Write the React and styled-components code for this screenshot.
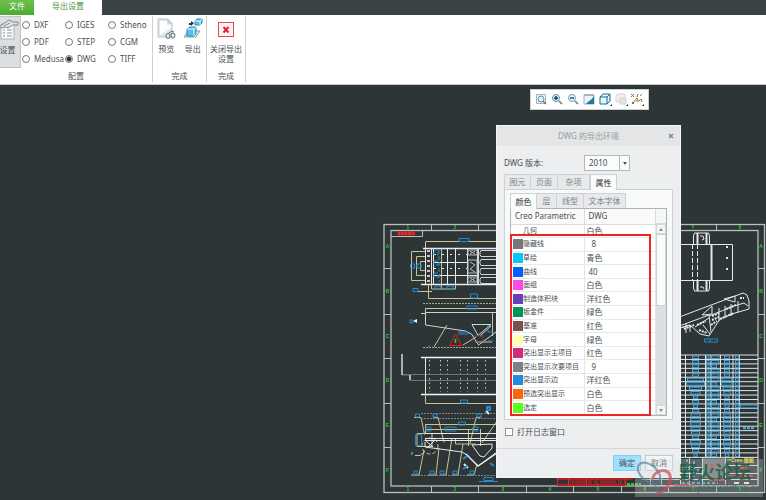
import { useState } from 'react';
import styled, { createGlobalStyle } from 'styled-components';

const FORMATS = ['DXF', 'IGES', 'Stheno', 'PDF', 'STEP', 'CGM', 'Medusa', 'DWG', 'TIFF'];

const TABS = [
  { name: '图元', width: 27 },
  { name: '页面', width: 27 },
  { name: '杂项', width: 32 },
  { name: '属性', width: 27 },
];

const SUB_TABS = [
  { name: '颜色', width: 27 },
  { name: '层', width: 20 },
  { name: '线型', width: 27 },
  { name: '文本字体', width: 42 },
];

const COLOR_ROWS = [
  { name: '几何', value: '白色' },
  { name: '隐藏线', value: '8', color: '#77777b', pad: 5 },
  { name: '草绘', value: '青色', color: '#00c8ff' },
  { name: '曲线', value: '40', color: '#0062ff', pad: 2 },
  { name: '面组', value: '白色', color: '#ff4be6' },
  { name: '制造体积块', value: '洋红色', color: '#663ec0' },
  { name: '钣金件', value: '绿色', color: '#00965a' },
  { name: '基准', value: '红色', color: '#7c4f53' },
  { name: '字母', value: '绿色', color: '#ffffae' },
  { name: '突出显示主项目', value: '红色', color: '#cc2f79' },
  { name: '突出显示次要项目', value: '9', color: '#7d808b', pad: 5 },
  { name: '突出显示边', value: '洋红色', color: '#1d8ddd' },
  { name: '预选突出显示', value: '白色', color: '#ff660a' },
  { name: '选定', value: '白色', color: '#56ff1b' },
];

function SettingsIcon() {
  return (
    <svg width="24" height="22" viewBox="0 0 24 22" fill="none">
      <rect x="5" y="5" width="13" height="15" fill="#f8fafb" stroke="#a8b2b7" />
      <path d="M7 11h2M11 11h5M7 14h2M11 14h5M7 17h2M11 17h5" stroke="#8497a1" />
      <path d="M3 8 13 1l4 2h5v3h-5l-5 3-3-1-4 1z" fill="#dfe5e8" stroke="#7b888e" />
      <path d="m8 7 6-3" stroke="#7b888e" />
    </svg>
  );
}

function PreviewIcon() {
  return (
    <svg width="20" height="22" viewBox="0 0 20 22" fill="none">
      <path d="M2 1h10l4 4v14H2z" fill="#dfe7ea" stroke="#bac3c7" />
      <path d="M4 3h7v4h4v3L4 17z" fill="#fbfdfe" />
      <path d="M12 1v4h4" stroke="#bac3c7" />
      <ellipse cx="12" cy="18" rx="2" ry="2.500" fill="#dfe8ec" stroke="#5c6870" />
      <ellipse cx="17" cy="17.500" rx="2" ry="2.500" fill="#dfe8ec" stroke="#5c6870" />
      <path d="m13 15 3-2 2 1" stroke="#5c6870" />
    </svg>
  );
}

function ExportIcon() {
  return (
    <svg width="20" height="22" viewBox="0 0 20 22" fill="none">
      <path d="m1 19 4-6h12l-4 6z" fill="#edf2f5" stroke="#8b999f" />
      <path d="m4 11 3-2h6v7l-2 2H4z" fill="#5dc0ea" stroke="#2a8ab8" />
      <path d="M4 11h7v7M11 11l2-2" stroke="#e3f8ff" />
      <path d="m12 3 2-2h5v4l-2 2h-5z" fill="#5dc0ea" stroke="#2a8ab8" />
      <path d="M12 3h5v4M17 3l2-2" stroke="#e3f8ff" />
      <path d="M6 7V5h2V3l3 2-3 3V7z" fill="#26343b" />
    </svg>
  );
}

function CloseExportIcon() {
  return (
    <svg width="18" height="18" viewBox="0 0 18 18" fill="none">
      <rect x="1.500" y="2.500" width="15" height="14" fill="#fff3f3" stroke="#df4a4d" />
      <path d="m6.500 7 5 5.500M11.500 7l-5 5.500" stroke="#d52631" strokeWidth="2" />
    </svg>
  );
}

// small icons of the graphics toolbar
const VIEW_TOOLS = [
  {
    name: '重新调整',
    art: (
      <>
        <path d="M1.500 1.500h9v9h-9z" fill="#f1f4f5" stroke="#a9b2b7" />
        <circle cx="6" cy="6" r="3" fill="#d9eff9" stroke="#5896b3" />
        <path d="m8 8 3 3" stroke="#777" strokeWidth="1.500" />
      </>
    ),
  },
  {
    name: '放大',
    art: (
      <>
        <circle cx="5" cy="5" r="3.500" fill="#e3f5fc" stroke="#4f94b5" />
        <path d="M3 5h4M5 3v4" stroke="#123f5b" strokeWidth="1.500" />
        <path d="m8 8 3 3" stroke="#777" strokeWidth="1.500" />
      </>
    ),
  },
  {
    name: '缩小',
    art: (
      <>
        <circle cx="5" cy="5" r="3.500" fill="#e3f5fc" stroke="#6ba1b9" />
        <path d="M3 5h4" stroke="#1d546f" strokeWidth="1.500" />
        <path d="m8 8 3 3" stroke="#777" strokeWidth="1.500" />
      </>
    ),
  },
  {
    name: '重画',
    art: (
      <>
        <path d="M1 2h10v9H1z" fill="#eef4f6" stroke="#a3b1b8" />
        <path d="M11 3v8H3c2-3 5-3 8-8z" fill="#187ba0" />
        <path d="M1 2h10" stroke="#8799a2" />
      </>
    ),
  },
  {
    name: '显示样式',
    menu: true,
    art: (
      <>
        <path d="m1 4 3-3h7v7l-3 3H1z" fill="#e8f6fc" stroke="#176d96" />
        <path d="M1 4h7v7M8 4l3-3" stroke="#176d96" />
      </>
    ),
  },
  {
    name: '视图管理器',
    menu: true,
    art: (
      <>
        <path d="m1 3 2-2h7v8H1z" fill="#eeefef" stroke="#d3d6d8" />
        <path d="M5 5h6v6H5z" fill="#e2e3e4" stroke="#d3d6d8" />
      </>
    ),
  },
  {
    name: '基准显示',
    menu: true,
    art: (
      <>
        <path d="m0 1 3 3M3 1 0 4M6 4l1-3M9 3l2-2M2 10l4-5 1 2M5 8h3l2-2 1 3" stroke="#8f7047" />
        <path d="M1 10h2" stroke="#8f7047" strokeWidth="2" />
      </>
    ),
  },
];

const FRAME_X = [432, 479, 527, 574, 622, 669, 717];
const FRAME_Y = [268, 314, 358, 403, 447];
const BOM_ROWS = Array.from({ length: 24 }, (_, i) => 355 + i * 4.45);
const BOM_WIDTHS = [6, 6, 6, 6, 6, 16, 18, 12, 9, 4, 6, 4, 6, 9, 10, 10, 9, 8, 6, 10, 8, 6, 3];
const HOLE_COLS = [429, 440, 447, 460, 467, 477, 485];

function SheetFrame() {
  return (
    <g>
      <g stroke="#b9bfbf" fill="none">
        <rect x="384" y="224.500" width="380.500" height="268" strokeWidth="1.300" />
        <rect x="391" y="230.500" width="367" height="255.500" strokeWidth="1.300" />
        {FRAME_X.map((x) => (
          <path key={x} d={`M${x - 0.5} 224v6M${x - 0.5} 486v6`} />
        ))}
        {FRAME_Y.map((y) => (
          <path key={y} d={`M384 ${y + 0.5}h7M758 ${y + 0.5}h6`} />
        ))}
        <path d="M391 236.500h31.500v-6" />
      </g>
      <g fill="#16d422" fontSize="5" fontWeight="700" textAnchor="middle">
        {[408, 455, 503, 550, 598, 645, 693, 740].map((x, i) => (
          <g key={x}>
            <text x={x} y="229">{i + 1}</text>
            <text x={x} y="491">{i + 1}</text>
          </g>
        ))}
        {[248, 293, 338, 382, 427, 472].map((y, i) => (
          <g key={y}>
            <text x="387.500" y={y}>{'ABCDEF'[i]}</text>
            <text x="761" y={y}>{'ABCDEF'[i]}</text>
          </g>
        ))}
      </g>
      <path d="M397.500 233.500h18" stroke="#d92424" strokeWidth="2" />
      <path d="M398 233.500h17" stroke="#ee2424" strokeWidth="4" strokeDasharray="2 1 3 1" />
    </g>
  );
}

function PlanView() {
  return (
    <g fill="none">
      <g stroke="#c9c592">
        <path d="M425.500 248v-6.500H497M425 251.500h-13.500v29H425M425 256.500h-8.500v19h8.500M425 261.500h-4.500v9h4.500" />
        <path d="M413 291.500h19M428.500 284v14.500H497M431.500 284v5h24v-5M441.500 248v41" />
        <path d="M425 308.500h72M425.500 308v6M434 347l13-22M463 345l13-8M478 342h14M492.500 312v24" />
      </g>
      <g stroke="#e8ecec">
        <path d="M423 248.500h74M421 284.500h76" strokeWidth="1.400" />
        <path d="M425.500 248v36M431.500 248v36M433.500 248v36M447.500 248v36M455.500 248v36M467.500 248v36" />
        <path d="M478 248v36" strokeWidth="1.800" />
        <path d="M434 262.500h33M434 275.500h44" />
        <path d="M434 254.500h33M434 268.500h33" strokeDasharray="2 6" />
        <path d="M468 250h9v5h-9zM468 260h9v13h-9zM468 277h9v5h-9z" stroke="#b8bfc0" />
        <path d="m470 251 5 3M470 254l5-3M470 262l5 3-5 4 5 3M470 278l5 3M470 281l5-3" stroke="#b8bfc0" />
        {[249, 258, 267, 276].map((y) => (
          <path key={y} d={`M497 ${y + 1.5}h-16l-1 2v2l1 2h16`} stroke="#cfd4d4" />
        ))}
      </g>
      <path d="M428.500 250v33" stroke="#e9b9bb" strokeWidth="3" strokeDasharray="2 3" />
      <path d="M423 303.500h74M423 347.500h74" stroke="#a1a994" strokeDasharray="2 1" />
      <g stroke="#cfd3d3">
        <path d="M421 313.500h4M425.500 313v12l40 6 6 3 7 11 19-14M426 312.500h71" />
        <path d="M472 324.500h19l-13 11zM480 336l11-10" />
      </g>
      <path d="m455.500 334 6 11.500h-12z" stroke="#ee1818" />
      <path d="M455.500 339v4" stroke="#25dd25" strokeWidth="1.500" />
      <path d="M474 336h9v6h-9z" stroke="#9b5052" strokeDasharray="1 1" />
      <g stroke="#258bd0">
        <path d="M459 238.500h10v3h-10zM410.500 264h4v4h-4zM417 264h4v4h-4zM413 288.500h5v3h-5z" />
        <path d="M435 286h6v3h-6zM447 286h6v3h-6zM470.500 294h7v4h-7zM467 306h10v3h-10z" />
        <path d="M434 250h4v5h-4zM434 261h4v4h-4zM434 273h4v4h-4zM439 250v32" strokeDasharray="4 2" />
        <path d="M410 320h3v3h-3zM458 332h10v2h-10M488 332h6M488 341h5M429 345v2M488 325v7" />
      </g>
      <path d="m413 321 4-2v4z" fill="#eee" />
    </g>
  );
}

function SideViews() {
  return (
    <g fill="none">
      <g stroke="#f4f6f6">
        <path d="M421 357.500h76M421 394.500h76" strokeWidth="1.600" />
        {HOLE_COLS.map((x) => (
          <path key={x} d={`M${x + 0.5} 360v32`} strokeDasharray="1.5 3" stroke="#c6cbcb" />
        ))}
      </g>
      <path d="M402 374.500h95M402 375h8v5.500h87" stroke="#6d7576" />
      <path d="M402 354v21M410 375v5" stroke="#d4d9d9" strokeWidth="1.500" />
      <path d="M425.500 357v37" stroke="#e6e7d8" />
      <g stroke="#c9c592">
        <path d="M425.500 394v9.500H497" />
        <path d="M414 417.500h7l3.500 17M433 417.500h5l6 25M481 417.500h-5l-6 26M425 424.500h72M425.500 424v10M425 429.500h53" />
        <path d="M417 433.500h15v13h-15zM424 450l-5 25h-8M439 448l-3 27h-8M452 438l-6 37h-6M463 444l-5 31h-6M477 464l-3 11h-7" />
        <path d="M415 455.500h5l5-4M497 421l-15 22M455.500 444h20M455.500 438v6M468.500 429v17M480.500 429v17" />
        <circle cx="430" cy="446" r="8" strokeDasharray="4 2" />
      </g>
      <path d="M421 413.500h76M421 418.500h76M415 475.500h82" stroke="#7d8581" strokeDasharray="2 1" />
      <g stroke="#e4e8e8">
        <path d="M425 438.500h72M425 440.500h72" />
        <path d="M425 433.500h72M425 442v5l37 5 5 3 11 11 19-14" />
        <path d="m472 445 20-1v4l-8 9-4-1zM426 441l7 6M434 441l-7 7" />
        <path d="m466 454 12 12 19-13" strokeWidth="1.500" />
        <path d="m486 411 3 3M464 464l4 4" strokeWidth="2" />
      </g>
      <g stroke="#258bd0">
        <path d="M460.500 400h7v3h-7zM415.500 414h4v3h-4zM433 414h4v3h-4zM477 414h4v3h-4zM458.500 422h7v3h-7z" />
        <path d="M415.500 434.500h6v11h-6zM426 427h5v4h-5zM445 427h11v4h-11zM473 427h5v4h-5z" />
        <path d="M414 471h3v3h-3zM430 471h4v3h-4zM440 471h4v3h-4zM453 471h4v3h-4zM470 471h4v3h-4z" />
        <path d="m463 459 4-3M463 469l4-3M490 463l4 3M487 407h3v3h-3zM412 452v3" strokeWidth="2" />
        <path d="M479 481.500h19M484 477.500h9v3h-9z" />
      </g>
      <path d="M557 479h76M557 485h68" stroke="#b51d22" strokeWidth="2" />
      <path d="M557.500 478v8M568.500 478v8M573 482h10M586.500 478v8M597.500 478v8M603 482h12M625.500 478v8" stroke="#de2b2b" />
      <path d="M570 482h55" stroke="#8c2427" strokeWidth="4" strokeDasharray="4 2" />
      <path d="M627 484h14" stroke="#22d422" strokeWidth="2" strokeDasharray="3 1" />
      <path d="M642 479.500h33M642 485.500h33M650.500 478v8M661.500 478v8" stroke="#aab3b3" />
    </g>
  );
}

function PartViews() {
  return (
    <g fill="none" stroke="#e4e8e8">
      <path d="M674 244.500h58.500v36H674M693.500 244v-8l1-3h14l1 3v8M693.500 281v7l1 3h14l1-3v-7" />
      <path d="M697.500 233v11M706.500 233v11M697.500 281v10M706.500 281v10" strokeWidth="2" />
      <path d="M692.500 244v36M697.500 244v36" strokeDasharray="5 2" />
      <path d="M711.500 244v36" strokeWidth="2" />
      <path d="M727 246v33" strokeDasharray="2 9" strokeWidth="2" />
      <path d="M700 236h3l1 3-2 1M700 287h3l1 2" />
      <path d="M674 319l69-26 4 2 2 6v8l-14 4-15 6-11 17-9-2-10-9-16 5z" />
      <path d="m674 328 35-13 2 17M709 316l25-10 10-3 4 3M695 327l14-9M719 308v13M725 306v12M731 304v12M738 301v12M686 323v10" />
      <path d="m702 315 10-9v8zM724 299l11-3v6zM703 325l7 9M680 328l10-3v7" />
      <path d="m712 316 7-3M712 320l7-3M711 325l6-4M720 319l14-6M740 298h4M697 325l9-4M684 329l10-4M699 330l8 3M726 309l10-4" strokeWidth="2" strokeDasharray="2 1" />
      <path d="M704.500 339h13v3h-13zM710 339v3" stroke="#258bd0" />
    </g>
  );
}

function PartsList() {
  return (
    <g fill="none">
      <g stroke="#dfe4e4">
        {BOM_ROWS.map((y) => (
          <path key={y} d={`M675 ${y}h83`} />
        ))}
        <path d="M680.500 355v130M685.500 355v102M705.500 355v102M711 355v102M720.500 355v102M733 355v102M739.500 355v102" />
      </g>
      <g stroke="#4aa6da">
        {BOM_WIDTHS.map((w, i) => (
          <g key={BOM_ROWS[i]}>
            <rect x={695.5 - w / 2} y={BOM_ROWS[i] + 1} width={w} height="2.500" />
            <rect x="706.500" y={BOM_ROWS[i] + 1} width="2.500" height="2.500" />
            <rect x="711.500" y={BOM_ROWS[i] + 1} width={i % 4 === 2 ? 5 : 7.5} height="2.500" />
            <rect x={727 - w / 4 - 1} y={BOM_ROWS[i] + 1} width={w / 2 + 2} height="2.500" />
            <rect x="735.500" y={BOM_ROWS[i] + 1} width="3.500" height="2.500" />
          </g>
        ))}
        <path d="M740 405h18v3h-18z" />
        <path d="M743 428h12" strokeWidth="2.500" strokeDasharray="3 1" />
      </g>
      <path d="M702 458h23v20h-23z" fill="#6b7070" />
      <path d="M675 457.500h83M675 467.500h27M675 473.500h27M675 479.500h83M689.500 457v28M702.500 457v28M725.500 457v28M725 465.500h33M725 473.500h33" stroke="#cbd0d0" />
      <path d="M687 459v20M694 461v16M677 470h22M682 483h36" stroke="#3d9bd0" strokeWidth="2" strokeDasharray="3 2" />
      <path d="M710 465h8M735 468h12M729 476h24M675 485h18M709 480h16" stroke="#d7322c" strokeWidth="2" strokeDasharray="4 1" />
      <path d="M727 459.500h4" stroke="#31c84a" strokeWidth="2" />
      <text x="731" y="462" fill="#e8d936" fontSize="5" fontWeight="700">Creo 版图</text>
      <path d="M734 483h5M744 483h5" stroke="#eed5d5" strokeWidth="2" />
    </g>
  );
}

export default function App() {
  const [format, setFormat] = useState('DWG');
  const [version, setVersion] = useState('2010');
  const [log, setLog] = useState(false);

  return (
    <Page>
      <GlobalStyle />
      <MenuBar>
        <FileTab type="button">文件</FileTab>
        <RibbonTab type="button">导出设置</RibbonTab>
      </MenuBar>

      <Ribbon>
        <ConfigGroup>
          <ConfigBody>
            <SettingsButton type="button">
              <SettingsIcon />
              设置
            </SettingsButton>
            <FormatGrid>
              {FORMATS.map((name) => (
                <RadioLabel key={name}>
                  <Radio name="format" checked={format === name} onChange={() => setFormat(name)} />
                  {name}
                </RadioLabel>
              ))}
            </FormatGrid>
          </ConfigBody>
          <GroupTitle>配置</GroupTitle>
        </ConfigGroup>
        <Group $width={54}>
          <GroupBody>
            <ToolButton type="button">
              <PreviewIcon />
              预览
            </ToolButton>
            <ToolButton type="button">
              <ExportIcon />
              导出
            </ToolButton>
          </GroupBody>
          <GroupTitle>完成</GroupTitle>
        </Group>
        <Group $width={39}>
          <GroupBody>
            <ToolButton type="button">
              <CloseExportIcon />
              <span>
                关闭导出
                <br />
                设置
              </span>
            </ToolButton>
          </GroupBody>
          <GroupTitle>完成</GroupTitle>
        </Group>
      </Ribbon>

      <Canvas>
        <Drawing viewBox="0 85 766 415" preserveAspectRatio="xMinYMin meet">
          <SheetFrame />
          <PlanView />
          <SideViews />
          <PartViews />
          <PartsList />
        </Drawing>

        <ViewToolbar>
          {VIEW_TOOLS.map((tool) => (
            <ViewButton key={tool.name} type="button" aria-label={tool.name}>
              <svg width="13" height="13" viewBox="0 0 13 13" fill="none">
                {tool.art}
                {tool.menu && <path d="M11 13h2v-2z" fill="#222" />}
              </svg>
            </ViewButton>
          ))}
        </ViewToolbar>

        <Dialog role="dialog" aria-label="DWG 的导出环境">
          <TitleBar>
            <Title>DWG 的导出环境</Title>
            <CloseButton type="button" aria-label="关闭">
              <svg width="6" height="6" viewBox="0 0 6 6">
                <path d="m1 1 4 4M5 1 1 5" stroke="#85898c" strokeWidth="1.500" />
              </svg>
            </CloseButton>
          </TitleBar>

          <DialogBody>
            <VersionRow>
              <label htmlFor="version">DWG 版本:</label>
              <SelectBox>
                <VersionSelect id="version" value={version} onChange={(e) => setVersion(e.target.value)}>
                  <option>2010</option>
                  <option>2007</option>
                  <option>2004</option>
                </VersionSelect>
              </SelectBox>
            </VersionRow>

            <TabList role="tablist">
              {TABS.map((tab) => (
                <Tab
                  key={tab.name}
                  type="button"
                  role="tab"
                  $width={tab.width}
                  aria-selected={tab.name === '属性'}
                  $active={tab.name === '属性'}
                >
                  {tab.name}
                </Tab>
              ))}
            </TabList>
            <Panel>
              <TabList role="tablist">
                {SUB_TABS.map((tab) => (
                  <Tab
                    key={tab.name}
                    type="button"
                    role="tab"
                    $width={tab.width}
                    aria-selected={tab.name === '颜色'}
                    $active={tab.name === '颜色'}
                  >
                    {tab.name}
                  </Tab>
                ))}
              </TabList>
              <TableFrame>
                <ColorTable>
                  <thead>
                    <tr>
                      <HeadCell $width="73px">Creo Parametric</HeadCell>
                      <HeadCell>DWG</HeadCell>
                    </tr>
                  </thead>
                  <tbody>
                    {COLOR_ROWS.map((row) => (
                      <tr key={row.name}>
                        <Cell>
                          <ColorName>
                            <Swatch $color={row.color} />
                            {row.name}
                          </ColorName>
                        </Cell>
                        <Cell $pad={row.pad}>{row.value}</Cell>
                      </tr>
                    ))}
                  </tbody>
                </ColorTable>
                <ScrollColumn>
                  <ScrollHead />
                  <ScrollButton type="button" aria-label="向上滚动">
                    <svg width="4" height="3" viewBox="0 0 4 3"><path d="M0 3h4L2 0z" fill="#85898c" /></svg>
                  </ScrollButton>
                  <ScrollTrack>
                    <ScrollThumb />
                  </ScrollTrack>
                  <ScrollButton type="button" aria-label="向下滚动">
                    <svg width="4" height="3" viewBox="0 0 4 3"><path d="M0 0h4L2 3z" fill="#85898c" /></svg>
                  </ScrollButton>
                </ScrollColumn>
                <Highlight />
              </TableFrame>
            </Panel>

            <CheckLabel>
              <CheckBox checked={log} onChange={(e) => setLog(e.target.checked)} />
              打开日志窗口
            </CheckLabel>
          </DialogBody>

          <DialogFooter>
            <FooterButton type="button" $primary>确定</FooterButton>
            <FooterButton type="button">取消</FooterButton>
          </DialogFooter>
        </Dialog>

        <Watermark>
          <svg width="38" height="38" viewBox="0 0 38 38" fill="none">
            <ellipse cx="14" cy="14" rx="8" ry="13" transform="rotate(-50 14 14)" stroke="#557d94" strokeWidth="2" opacity="0.65" />
            <path d="M18 20c0-6 8-10 13-8s6 9 2 15-9 8-12 7" stroke="#cf4b57" strokeWidth="3" opacity="0.7" />
            <path d="M17 19c2 7 5 12 10 16" stroke="#557d94" strokeWidth="2" opacity="0.5" />
          </svg>
          <WatermarkText>
            <WatermarkName>野火论坛</WatermarkName>
            <WatermarkUrl>www.proewildfire.cn</WatermarkUrl>
          </WatermarkText>
        </Watermark>
      </Canvas>
    </Page>
  );
}

const GlobalStyle = createGlobalStyle`
  * {
    box-sizing: border-box;
  }
  body {
    margin: 0;
    background: #2e3536;
  }
  body, button, select, input {
    font-family: 'Noto Sans', 'Noto Sans CJK SC', sans-serif;
    font-size: 8px;
    line-height: 10px;
    color: #4b4f52;
  }
  button {
    margin: 0;
    padding: 0;
    border: 0;
    background: none;
  }
`;

const Page = styled.div`
  display: flex;
  flex-direction: column;
  min-height: 100vh;
  overflow: hidden;
`;

const MenuBar = styled.div`
  display: flex;
  height: 15px;
  background: #3b4445;
`;

const FileTab = styled.button`
  width: 34px;
  padding: 0 6px 3px;
  background: linear-gradient(#6dc04a, #4dab31);
  color: #fff;
`;

const RibbonTab = styled.button`
  width: 68px;
  padding-bottom: 3px;
  background: #fff;
  color: #4a963a;
`;

const Ribbon = styled.div`
  display: flex;
  height: 70px;
  padding: 1px 0 2px;
  background: #fff;
  border-bottom: 1px solid #c5cccd;
`;

const Group = styled.section`
  display: flex;
  flex-direction: column;
  width: ${(props) => props.$width}px;
  border-right: 1px solid #ccd0d1;
`;

const ConfigGroup = styled(Group)`
  width: 153px;
`;

const ConfigBody = styled.div`
  display: flex;
  flex: 1;
  align-items: flex-start;
`;

const GroupBody = styled.div`
  display: flex;
  flex: 1;
  padding-top: 2px;
`;

const GroupTitle = styled.div`
  height: 11px;
  text-align: center;
`;

const SettingsButton = styled.button`
  display: flex;
  flex-direction: column;
  align-items: center;
  width: 21px;
  height: 52px;
  padding: 2px 5px 0 0;
  gap: 4px;
  overflow: hidden;
  white-space: nowrap;
  background: #dcdfe1;
  border: 1px solid #c0c4c7;
  border-left: 0;
`;

const FormatGrid = styled.div`
  display: grid;
  grid-template-columns: repeat(3, 43px);
  grid-auto-rows: 17px;
  padding-left: 1px;
`;

const RadioLabel = styled.label`
  display: flex;
  align-items: center;
  gap: 4px;
`;

const Radio = styled.input.attrs({ type: 'radio' })`
  appearance: none;
  flex: none;
  width: 8px;
  height: 8px;
  margin: 0;
  border: 1px solid #777b7e;
  border-radius: 50%;
  background: ${(props) => (props.checked ? 'radial-gradient(circle, #333 0 2px, #fff 3px)' : '#fff')};
`;

const ToolButton = styled.button`
  display: flex;
  flex: 1;
  flex-direction: column;
  align-items: center;
  gap: 4px;

  svg {
    min-height: 22px;
  }
`;

const Canvas = styled.main`
  position: relative;
  flex: 1;
  background: #2e3536;
`;

const Drawing = styled.svg`
  display: block;
  width: 100%;
  font-family: 'Liberation Sans', 'Noto Sans CJK SC', sans-serif;
`;

const ViewToolbar = styled.div`
  position: absolute;
  top: 4px;
  left: 530px;
  display: flex;
  align-items: center;
  gap: 3px;
  height: 21px;
  padding: 0 4px;
  background: #fff;
  border: 1px solid #cbd0d2;
`;

const ViewButton = styled.button`
  display: flex;
`;

const Dialog = styled.div`
  position: absolute;
  top: 40px;
  left: 496px;
  width: 185px;
  background: #eceef0;
  border: 1px solid #f5f6f7;
`;

const TitleBar = styled.div`
  display: flex;
  align-items: center;
  height: 20px;
  padding: 0 6px 0 12px;
  background: #e3e5e7;
`;

const Title = styled.div`
  flex: 1;
  text-align: center;
  color: #999da0;
`;

const CloseButton = styled.button`
  display: flex;
`;

const DialogBody = styled.div`
  padding: 9px 7px 0;
`;

const VersionRow = styled.div`
  display: flex;
  align-items: center;
  justify-content: space-between;
  padding-right: 43px;
  margin-bottom: 3px;
`;

const SelectBox = styled.div`
  position: relative;
  width: 46px;

  &::after {
    content: '';
    position: absolute;
    top: 7px;
    right: 3px;
    border: 2px solid transparent;
    border-top: 3px solid #555;
    pointer-events: none;
  }
`;

const VersionSelect = styled.select`
  appearance: none;
  display: block;
  width: 100%;
  height: 16px;
  padding: 0 4px;
  border: 1px solid #b4b8bb;
  border-radius: 0;
  background: linear-gradient(#b4b8bb, #b4b8bb) right 9px top / 1px 100% no-repeat, #fafbfb;
`;

const TabList = styled.div`
  display: flex;
`;

const Tab = styled.button`
  position: relative;
  z-index: 1;
  flex: none;
  width: ${(props) => props.$width}px;
  height: ${(props) => (props.$active ? '16px' : '15px')};
  margin-bottom: ${(props) => (props.$active ? '-1px' : '0')};
  border: 1px solid #cdd1d4;
  border-left-width: ${(props) => (props.$active ? '1px' : '0')};
  border-bottom: 0;
  background: ${(props) => (props.$active ? '#fafbfb' : '#e7e9eb')};
  color: ${(props) => (props.$active ? '#2e3234' : '#808487')};
  white-space: nowrap;

  &:first-child {
    border-left-width: 1px;
  }
`;

const Panel = styled.div`
  padding: 3px 5px 3px;
  border: 1px solid #cdd1d4;
  background: #f8f9f9;
`;

const TableFrame = styled.div`
  position: relative;
  display: flex;
  height: 208px;
  border: 1px solid #adb2b5;
  background: #fff;
`;

const ColorTable = styled.table`
  flex: 1;
  height: 206px;
  table-layout: fixed;
  border-collapse: collapse;
`;

const HeadCell = styled.th`
  width: ${(props) => props.$width || 'auto'};
  height: 15px;
  padding: 0 4px;
  border-right: 1px solid #d9dcde;
  border-bottom: 1px solid #d9dcde;
  background: #fafafa;
  font-weight: 400;
  text-align: left;
  white-space: nowrap;
`;

const Cell = styled.td`
  padding: 0 0 0 ${(props) => 2 + (props.$pad || 0)}px;
  border-right: 1px solid #e3e6e7;
  border-bottom: 1px solid #e7e9ea;
  white-space: nowrap;
`;

const ColorName = styled.div`
  display: flex;
  align-items: center;
  font-size: 7px;
`;

const Swatch = styled.span`
  width: 10px;
  height: 10px;
  background: ${(props) => props.$color || 'transparent'};
`;

const ScrollColumn = styled.div`
  display: flex;
  flex-direction: column;
  width: 10px;
  background: #f5f6f6;
`;

const ScrollHead = styled.div`
  height: 15px;
  border-bottom: 1px solid #d9dcde;
`;

const ScrollButton = styled.button`
  display: flex;
  align-items: center;
  justify-content: center;
  height: 10px;
  border: 1px solid #d5d8da;
`;

const ScrollTrack = styled.div`
  flex: 1;
  background: #dcdfe1;
`;

const ScrollThumb = styled.div`
  height: 42%;
  border: 1px solid #cdd1d3;
  background: #fafbfb;
`;

/* callout around the mapped colours */
const Highlight = styled.div`
  position: absolute;
  top: 25px;
  right: 15px;
  bottom: -1px;
  left: -1px;
  border: 2px solid #eb2427;
  pointer-events: none;
`;

const CheckLabel = styled.label`
  display: flex;
  align-items: center;
  gap: 4px;
  padding: 7px 1px 11px;
`;

const CheckBox = styled.input.attrs({ type: 'checkbox' })`
  appearance: none;
  width: 8px;
  height: 8px;
  margin: 0;
  border: 1px solid #8f9497;
  background: ${(props) => (props.checked ? '#3fa4dc' : '#fff')};
`;

const DialogFooter = styled.div`
  display: flex;
  justify-content: flex-end;
  gap: 4px;
  padding: 6px 7px;
  border-top: 1px solid #d4d7d9;
`;

const FooterButton = styled.button`
  width: 28px;
  height: 16px;
  border: 1px solid ${(props) => (props.$primary ? '#83cff1' : '#c5c9cc')};
  background: ${(props) => (props.$primary ? '#9fdfff' : '#f4f5f6')};
`;

const Watermark = styled.div`
  position: absolute;
  left: 635px;
  top: 374px;
  display: flex;
  width: 128px;
  height: 38px;
  background: rgba(220, 228, 226, 0.28);
  pointer-events: none;
`;

const WatermarkText = styled.div`
  width: 90px;
`;

const WatermarkName = styled.div`
  padding: 2px 0 0 6px;
  font-size: 18px;
  font-weight: 700;
  line-height: 22px;
  color: rgba(20, 92, 65, 0.75);
`;

const WatermarkUrl = styled.div`
  font-family: 'Liberation Sans', sans-serif;
  font-size: 10px;
  line-height: 12px;
  color: rgba(67, 102, 101, 0.8);
`;
